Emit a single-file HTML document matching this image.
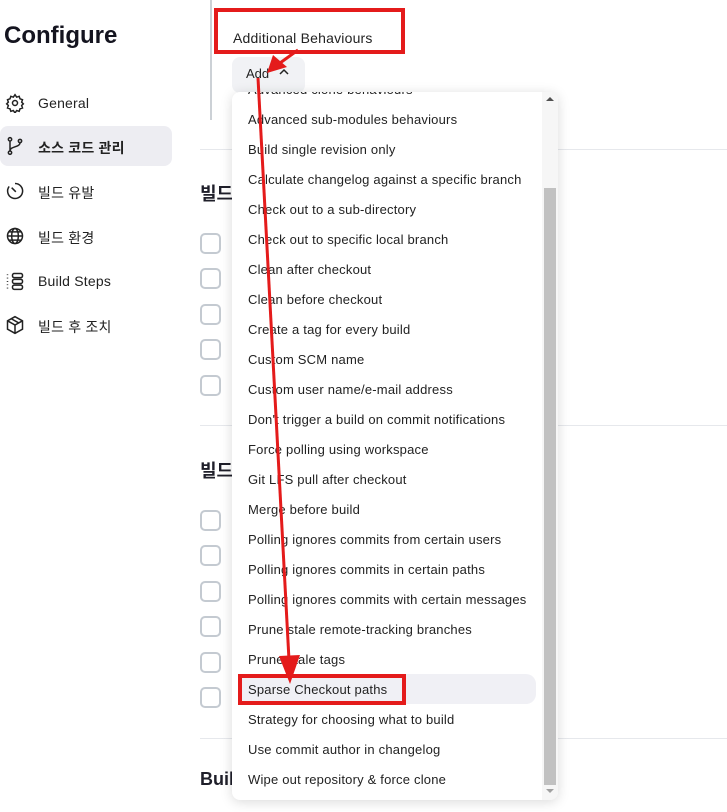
<!DOCTYPE html>
<html><head><meta charset="utf-8"><style>
*{margin:0;padding:0;box-sizing:border-box}
body{width:727px;height:812px;overflow:hidden;background:#fff;font-family:"Liberation Sans","Noto Sans CJK KR",sans-serif;color:#1f1f2a;position:relative}
.a{position:absolute}
.nav{position:absolute;left:38px;font-size:14px;color:#222;letter-spacing:0.2px}
.ic{position:absolute;left:5px}
.cb{position:absolute;left:200px;width:21px;height:21px;border:2px solid #c4cad1;border-radius:5px}
.sep{position:absolute;left:200px;right:0;height:1px;background:#e6e8ec}
.menu{position:absolute;left:232px;top:92px;width:326px;height:708px;background:#fff;border-radius:8px;box-shadow:0 2px 12px rgba(0,0,0,.15);overflow:hidden}
.it{position:absolute;left:16px;font-size:13px;color:#222;white-space:nowrap;line-height:30px;letter-spacing:0.2px}
</style></head><body>
<div class="a" style="left:4px;top:22px;font-size:24px;font-weight:bold;color:#14141f">Configure</div>
<div class="a" style="left:0;top:126px;width:172px;height:40px;background:#ededf2;border-radius:8px"></div>
<svg class="ic" style="top:93px" width="20" height="20" viewBox="0 0 24 24" fill="none" stroke="#222" stroke-width="1.8"><circle cx="12" cy="12" r="3"/><path d="M12 2l2 3 3-1 1 3 3 1-1 3 2 2-2 2 1 3-3 1-1 3-3-1-2 3-2-3-3 1-1-3-3-1 1-3-2-2 2-2-1-3 3-1 1-3 3 1z"/></svg>
<div class="nav" style="top:95px">General</div>
<svg class="ic" style="top:136px" width="20" height="20" viewBox="0 0 24 24" fill="none" stroke="#222" stroke-width="1.8"><circle cx="6" cy="4" r="2"/><circle cx="6" cy="20" r="2"/><circle cx="18" cy="6" r="2"/><path d="M6 6v12M18 8c0 6-12 4-12 10"/></svg>
<div class="nav" style="top:138px;font-weight:bold">소스 코드 관리</div>
<svg class="ic" style="top:181px" width="20" height="20" viewBox="0 0 24 24" fill="none" stroke="#222" stroke-width="1.8"><path d="M12 3a9 9 0 1 1-7 3.5"/><path d="M8 8l5 5"/></svg>
<div class="nav" style="top:183px">빌드 유발</div>
<svg class="ic" style="top:226px" width="20" height="20" viewBox="0 0 24 24" fill="none" stroke="#222" stroke-width="1.8"><circle cx="12" cy="12" r="9"/><ellipse cx="12" cy="12" rx="4" ry="9"/><path d="M3 12h18M4.5 7h15M4.5 17h15"/></svg>
<div class="nav" style="top:228px">빌드 환경</div>
<svg class="ic" style="top:271px" width="20" height="20" viewBox="0 0 24 24" fill="none" stroke="#222" stroke-width="1.8"><rect x="9" y="3" width="12" height="5" rx="2"/><rect x="9" y="10" width="12" height="5" rx="2"/><rect x="9" y="17" width="12" height="5" rx="2"/><path d="M3 4v1M3 8v1M3 12v1M3 16v1M3 20v1"/></svg>
<div class="nav" style="top:273px">Build Steps</div>
<svg class="ic" style="top:315px" width="20" height="20" viewBox="0 0 24 24" fill="none" stroke="#222" stroke-width="1.8"><path d="M12 2l9 5v10l-9 5-9-5V7z M3 7l9 5 9-5M12 12v10M7.5 4.5l9 5"/></svg>
<div class="nav" style="top:317px">빌드 후 조치</div>

<div class="a" style="left:210px;top:0;width:2px;height:120px;background:#ccd1d6"></div>
<div class="a" style="left:233px;top:30px;font-size:14px;color:#222;letter-spacing:0.2px">Additional Behaviours</div>
<div class="a" style="left:232px;top:57px;width:73px;height:36px;background:#f1f2f5;border-radius:8px"></div>
<div class="a" style="left:246px;top:66px;font-size:13px;color:#222">Add</div>
<svg class="a" style="left:279px;top:68px" width="10" height="8" viewBox="0 0 10 8"><path d="M1 6l4-4 4 4" fill="none" stroke="#222" stroke-width="1.5"/></svg>

<div class="sep" style="top:149px"></div>
<div class="sep" style="top:425px"></div>
<div class="sep" style="top:738px"></div>
<div class="a" style="left:200px;top:180px;font-size:18px;font-weight:bold">빌드</div>
<div class="a" style="left:200px;top:457px;font-size:18px;font-weight:bold">빌드</div>
<div class="a" style="left:200px;top:769px;font-size:18px;font-weight:bold">Buil</div>
<div class="cb" style="top:233px"></div><div class="cb" style="top:268px"></div><div class="cb" style="top:304px"></div><div class="cb" style="top:339px"></div><div class="cb" style="top:375px"></div>
<div class="cb" style="top:510px"></div><div class="cb" style="top:545px"></div><div class="cb" style="top:581px"></div><div class="cb" style="top:616px"></div><div class="cb" style="top:652px"></div><div class="cb" style="top:687px"></div>

<div class="menu">
<div class="a" style="left:6px;top:582px;width:298px;height:30px;background:#f0f0f5;border-radius:10px"></div>
<div class="it" style="top:-17px">Advanced clone behaviours</div>
<div class="it" style="top:13px">Advanced sub-modules behaviours</div>
<div class="it" style="top:43px">Build single revision only</div>
<div class="it" style="top:73px">Calculate changelog against a specific branch</div>
<div class="it" style="top:103px">Check out to a sub-directory</div>
<div class="it" style="top:133px">Check out to specific local branch</div>
<div class="it" style="top:163px">Clean after checkout</div>
<div class="it" style="top:193px">Clean before checkout</div>
<div class="it" style="top:223px">Create a tag for every build</div>
<div class="it" style="top:253px">Custom SCM name</div>
<div class="it" style="top:283px">Custom user name/e-mail address</div>
<div class="it" style="top:313px">Don't trigger a build on commit notifications</div>
<div class="it" style="top:343px">Force polling using workspace</div>
<div class="it" style="top:373px">Git LFS pull after checkout</div>
<div class="it" style="top:403px">Merge before build</div>
<div class="it" style="top:433px">Polling ignores commits from certain users</div>
<div class="it" style="top:463px">Polling ignores commits in certain paths</div>
<div class="it" style="top:493px">Polling ignores commits with certain messages</div>
<div class="it" style="top:523px">Prune stale remote-tracking branches</div>
<div class="it" style="top:553px">Prune stale tags</div>
<div class="it" style="top:583px">Sparse Checkout paths</div>
<div class="it" style="top:613px">Strategy for choosing what to build</div>
<div class="it" style="top:643px">Use commit author in changelog</div>
<div class="it" style="top:673px">Wipe out repository &amp; force clone</div>
<div class="a" style="left:310px;top:0;width:16px;height:708px;background:#f6f6f6"></div>
<div class="a" style="left:312px;top:96px;width:12px;height:597px;background:#c1c1c1"></div>
<svg class="a" style="left:313px;top:4px" width="10" height="6"><path d="M1 5l4-4 4 4z" fill="#505050"/></svg>
<svg class="a" style="left:313px;top:696px" width="10" height="6"><path d="M1 1l4 4 4-4z" fill="#a0a0a0"/></svg>
</div>

<svg class="a" style="left:0;top:0" width="727" height="812">
<rect x="216" y="10" width="187" height="42" fill="none" stroke="#e41b1b" stroke-width="4"/>
<rect x="240" y="676" width="164" height="27" fill="none" stroke="#e41b1b" stroke-width="4"/>
<line x1="298" y1="50" x2="280" y2="63" stroke="#e41b1b" stroke-width="3"/>
<path d="M267 73 L273 55 L287 67 Z" fill="#e41b1b"/>
<line x1="258" y1="78" x2="289" y2="660" stroke="#e41b1b" stroke-width="3"/>
<path d="M290 684 L279 656 L300 655 Z" fill="#e41b1b"/>
</svg>
</body></html>
